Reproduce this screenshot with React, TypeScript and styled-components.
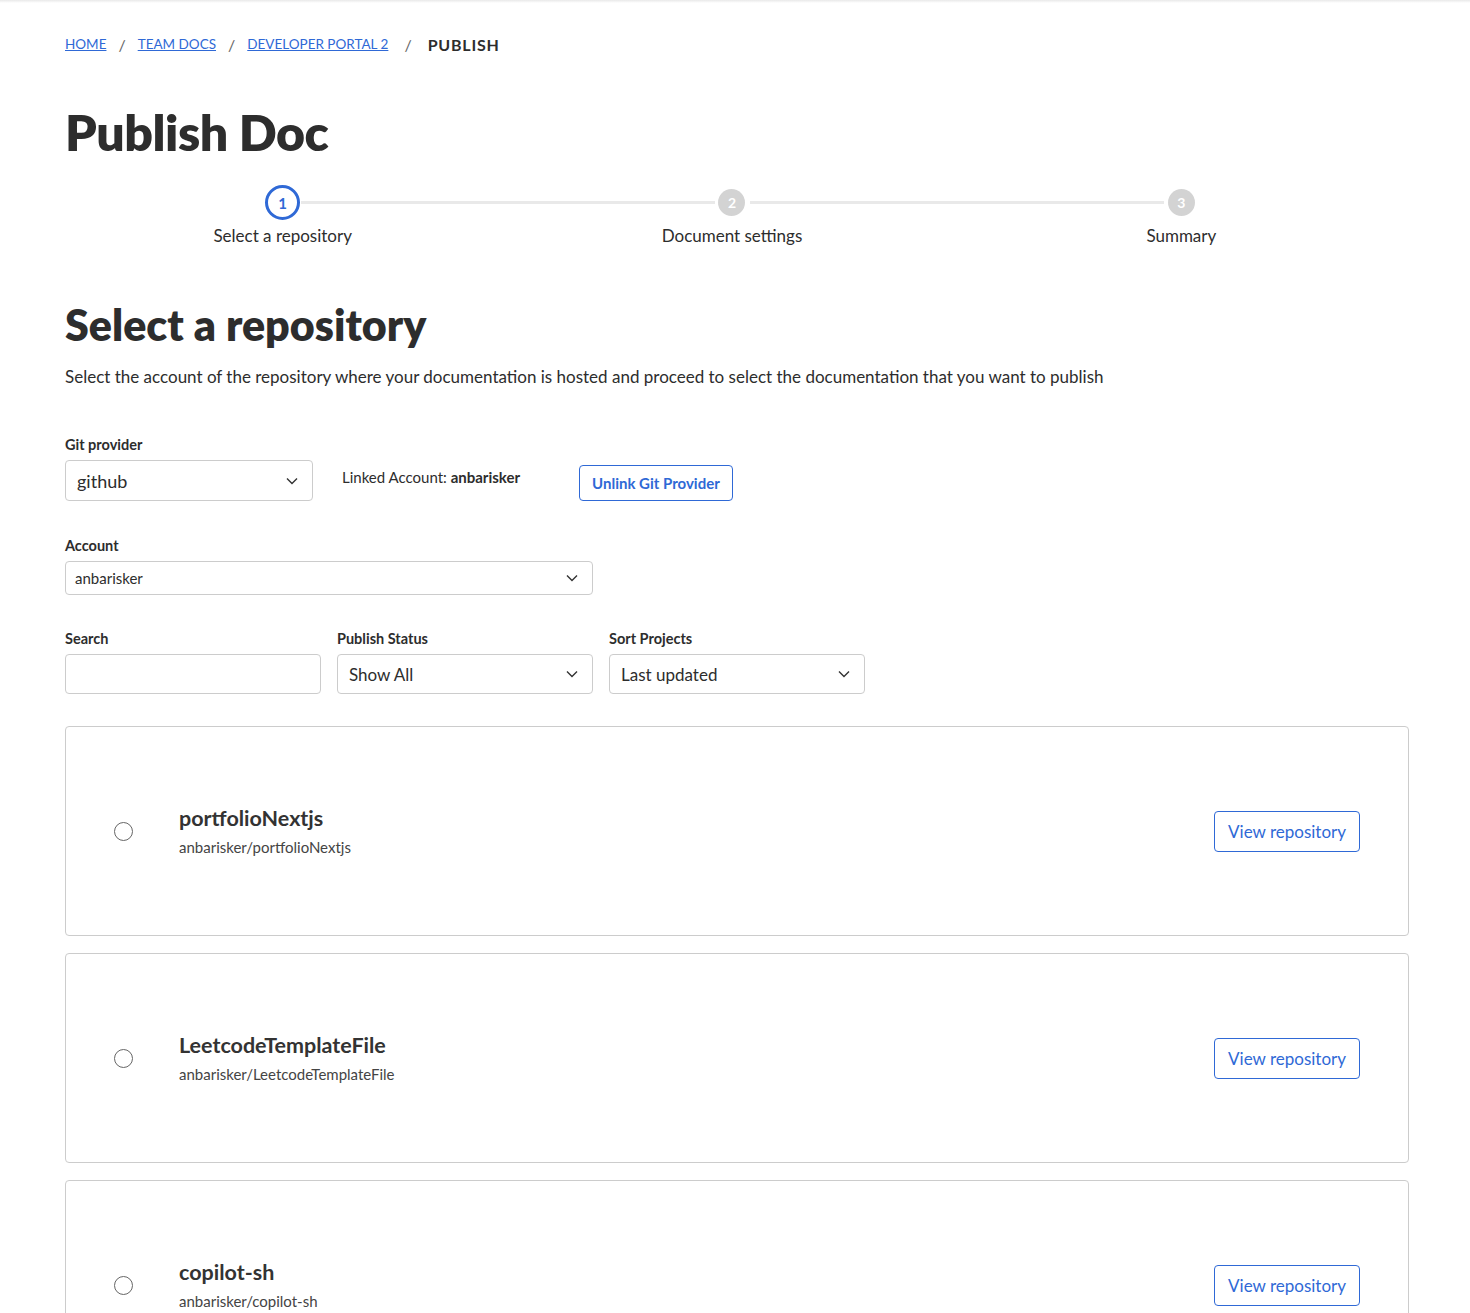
import styled, { createGlobalStyle } from "styled-components";

const GlobalStyle = createGlobalStyle`
  body {
    margin: 0;
    background: #ffffff;
    font-family: "Lato", "Noto Sans", sans-serif;
    color: #2d2d2d;
  }
  * { box-sizing: border-box; }
`;

const BLUE = "#2f69d6";

const repos = [
  { name: "portfolioNextjs", path: "anbarisker/portfolioNextjs" },
  { name: "LeetcodeTemplateFile", path: "anbarisker/LeetcodeTemplateFile" },
  { name: "copilot-sh", path: "anbarisker/copilot-sh" },
];

const steps = ["Select a repository", "Document settings", "Summary"];

const Chevron = () => (
  <svg width="12" height="8" viewBox="0 0 12 8">
    <polyline points="1,1.5 6,6.5 11,1.5" fill="none" stroke="#333" strokeWidth="1.4" />
  </svg>
);

const App = () => {
  return (
    <>
      <GlobalStyle />
      <TopShadow />
      <PageStyled>
        <BreadcrumbStyled>
          <a href="#">HOME</a>
          <Sep>/</Sep>
          <a href="#">TEAM DOCS</a>
          <Sep>/</Sep>
          <a href="#">DEVELOPER PORTAL 2</a>
          <Sep $wide>/</Sep>
          <strong>PUBLISH</strong>
        </BreadcrumbStyled>

        <TitleStyled>Publish Doc</TitleStyled>

        <StepperStyled>
          {steps.map((label, i) => (
            <StepStyled key={label} $first={i === 0}>
              <StepCircle $active={i === 0}>{i + 1}</StepCircle>
              <StepLabel>{label}</StepLabel>
            </StepStyled>
          ))}
        </StepperStyled>

        <SectionTitle>Select a repository</SectionTitle>
        <DescStyled>
          Select the account of the repository where your documentation is hosted and proceed to
          select the documentation that you want to publish
        </DescStyled>

        <FieldLabel $top={47}>Git provider</FieldLabel>
        <ProviderRow>
          <SelectBox $width={248} $height={41} $size={18}>
            <span>github</span>
            <Chevron />
          </SelectBox>
          <LinkedText>
            Linked Account: <b>anbarisker</b>
          </LinkedText>
          <UnlinkButton>Unlink Git Provider</UnlinkButton>
        </ProviderRow>

        <FieldLabel $top={36}>Account</FieldLabel>
        <SelectBox $width={528} $height={34} $size={15} $padLeft={9}>
          <span>anbarisker</span>
          <Chevron />
        </SelectBox>

        <FilterRow>
          <FilterCol>
            <FieldLabel>Search</FieldLabel>
            <SearchInput />
          </FilterCol>
          <FilterCol>
            <FieldLabel>Publish Status</FieldLabel>
            <SelectBox $width={256} $height={40} $size={17}>
              <span>Show All</span>
              <Chevron />
            </SelectBox>
          </FilterCol>
          <FilterCol>
            <FieldLabel>Sort Projects</FieldLabel>
            <SelectBox $width={256} $height={40} $size={17}>
              <span>Last updated</span>
              <Chevron />
            </SelectBox>
          </FilterCol>
        </FilterRow>

        <RepoList>
          {repos.map((r) => (
            <RepoCard key={r.name}>
              <Radio />
              <RepoInfo>
                <RepoName>{r.name}</RepoName>
                <RepoPath>{r.path}</RepoPath>
              </RepoInfo>
              <ViewButton>View repository</ViewButton>
            </RepoCard>
          ))}
        </RepoList>
      </PageStyled>
    </>
  );
};

export default App;

const TopShadow = styled.div`
  height: 3px;
  background: linear-gradient(#e9e9e9, #ffffff);
`;

const PageStyled = styled.div`
  padding: 30px 61px 0 65px;
`;

const BreadcrumbStyled = styled.nav`
  display: flex;
  align-items: center;
  font-size: 13.5px;
  height: 22px;
  a {
    color: ${BLUE};
    text-decoration: underline;
  }
  strong {
    font-weight: 700;
    font-size: 16px;
    color: #2d2d2d;
    letter-spacing: 0.8px;
  }
`;

const Sep = styled.span<{ $wide?: boolean }>`
  color: #666;
  margin: 0 ${({ $wide }) => ($wide ? 16 : 12)}px;
  font-size: 16px;
`;

const TitleStyled = styled.h1`
  margin: 47px 0 0;
  font-size: 50px;
  line-height: 60px;
  font-weight: 800;
  color: #2d2d2d;
  letter-spacing: -0.5px;
`;

const StepperStyled = styled.div`
  display: grid;
  grid-template-columns: repeat(3, 1fr);
  margin: 23px 0 0 -7px;
  width: 1348px;
`;

const StepStyled = styled.div<{ $first: boolean }>`
  position: relative;
  display: flex;
  flex-direction: column;
  align-items: center;
  &::before {
    content: "";
    display: ${({ $first }) => ($first ? "none" : "block")};
    position: absolute;
    top: 16px;
    left: calc(-50% + 18px);
    right: calc(50% + 17px);
    height: 3px;
    background: #e9e9e9;
  }
`;

const StepCircle = styled.div<{ $active: boolean }>`
  width: ${({ $active }) => ($active ? 35 : 27)}px;
  height: ${({ $active }) => ($active ? 35 : 27)}px;
  margin: ${({ $active }) => ($active ? 0 : 4)}px 0;
  border-radius: 50%;
  display: flex;
  align-items: center;
  justify-content: center;
  font-size: ${({ $active }) => ($active ? 15 : 14)}px;
  font-weight: 700;
  color: ${({ $active }) => ($active ? BLUE : "#ffffff")};
  background: ${({ $active }) => ($active ? "#ffffff" : "#d3d3d3")};
  border: ${({ $active }) => ($active ? `3px solid ${BLUE}` : "none")};
`;

const StepLabel = styled.div`
  margin-top: 5px;
  font-size: 17px;
  color: #2d2d2d;
`;

const SectionTitle = styled.h2`
  margin: 53px 0 0;
  font-size: 43px;
  line-height: 52px;
  font-weight: 800;
  color: #2d2d2d;
`;

const DescStyled = styled.p`
  margin: 14px 0 0;
  font-size: 17px;
  line-height: 24px;
  color: #2d2d2d;
`;

const FieldLabel = styled.div<{ $top?: number }>`
  margin-top: ${({ $top }) => $top ?? 0}px;
  margin-bottom: 7px;
  font-size: 14.5px;
  font-weight: 700;
  color: #2d2d2d;
`;

const ProviderRow = styled.div`
  display: flex;
  align-items: flex-start;
`;

const SelectBox = styled.div<{ $width: number; $height: number; $size: number; $padLeft?: number }>`
  width: ${({ $width }) => $width}px;
  height: ${({ $height }) => $height}px;
  border: 1px solid #cccccc;
  border-radius: 4px;
  display: flex;
  align-items: center;
  justify-content: space-between;
  padding: 0 14px 0 ${({ $padLeft }) => $padLeft ?? 11}px;
  font-size: ${({ $size }) => $size}px;
  color: #2d2d2d;
  background: #ffffff;
`;

const LinkedText = styled.div`
  margin: 8px 0 0 29px;
  font-size: 15px;
  color: #2d2d2d;
  b {
    font-weight: 700;
  }
`;

const UnlinkButton = styled.button`
  margin: 5px 0 0 59px;
  height: 36px;
  padding: 0 12px;
  border: 1px solid ${BLUE};
  border-radius: 4px;
  background: #ffffff;
  color: ${BLUE};
  font-family: inherit;
  font-size: 15px;
  font-weight: 700;
  cursor: pointer;
`;

const FilterRow = styled.div`
  display: flex;
  gap: 16px;
  margin-top: 35px;
`;

const FilterCol = styled.div`
  display: flex;
  flex-direction: column;
`;

const SearchInput = styled.input`
  width: 256px;
  height: 40px;
  border: 1px solid #cccccc;
  border-radius: 4px;
  font-family: inherit;
  font-size: 16px;
  padding: 0 10px;
`;

const RepoList = styled.div`
  display: flex;
  flex-direction: column;
  gap: 17px;
  margin-top: 32px;
`;

const RepoCard = styled.div`
  height: 210px;
  border: 1px solid #cccccc;
  border-radius: 4px;
  display: flex;
  align-items: center;
  padding: 0 48px 0 48px;
`;

const Radio = styled.span`
  width: 19px;
  height: 19px;
  border-radius: 50%;
  border: 1.3px solid #666666;
  flex-shrink: 0;
`;

const RepoInfo = styled.div`
  flex: 1;
  margin-left: 46px;
  margin-top: -2px;
`;

const RepoName = styled.div`
  font-size: 21.5px;
  font-weight: 700;
  color: #333333;
  line-height: 28px;
`;

const RepoPath = styled.div`
  font-size: 15px;
  color: #444444;
  margin-top: 6px;
`;

const ViewButton = styled.button`
  height: 41px;
  padding: 0 13px;
  border: 1px solid ${BLUE};
  border-radius: 4px;
  background: #ffffff;
  color: ${BLUE};
  font-family: inherit;
  font-size: 17px;
  cursor: pointer;
`;
